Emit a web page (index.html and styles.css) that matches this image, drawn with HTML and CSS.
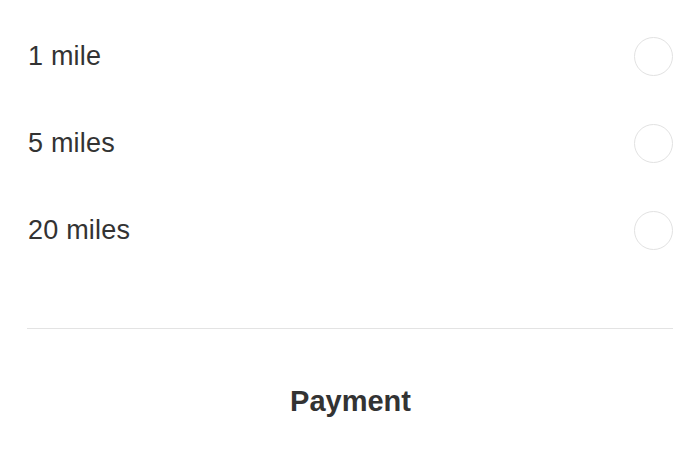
FILE: index.html
```html
<!DOCTYPE html>
<html lang="en">
<head>
  <meta charset="UTF-8">
  <meta name="viewport" content="width=device-width, initial-scale=1.0">
  <title>Distance</title>
  <link rel="stylesheet" href="styles.css">
</head>
<body>
  <div class="container">
    <ul class="options">
      <li class="option">
        <span class="option-label">1 mile</span>
        <span class="radio"></span>
      </li>
      <li class="option">
        <span class="option-label">5 miles</span>
        <span class="radio"></span>
      </li>
      <li class="option">
        <span class="option-label">20 miles</span>
        <span class="radio"></span>
      </li>
    </ul>
    <hr class="divider">
    <h2 class="section-title">Payment</h2>
  </div>
</body>
</html>
```

FILE: styles.css
```css
body {
  font-family: "Liberation Sans", Arial, sans-serif;
  background-color: #fff;
  color: #333;
  margin: 0;
  padding: 0;
}

.container {
  padding: 13px 27px 0 28px;
}

.options {
  list-style: none;
  margin: 0;
  padding: 0;
}

.option {
  display: flex;
  justify-content: space-between;
  align-items: center;
  height: 87px;
}

.option-label {
  font-size: 27px;
  letter-spacing: 0.2px;
}

.radio {
  width: 37px;
  height: 37px;
  border: 1.5px solid #e2e2e2;
  border-radius: 50%;
}

.divider {
  border: none;
  border-top: 1px solid #e3e3e3;
  margin: 54px 0 0 -1px;
}

.section-title {
  text-align: center;
  font-size: 29px;
  font-weight: bold;
  margin: 56px 0 0;
  color: #333;
}
```
